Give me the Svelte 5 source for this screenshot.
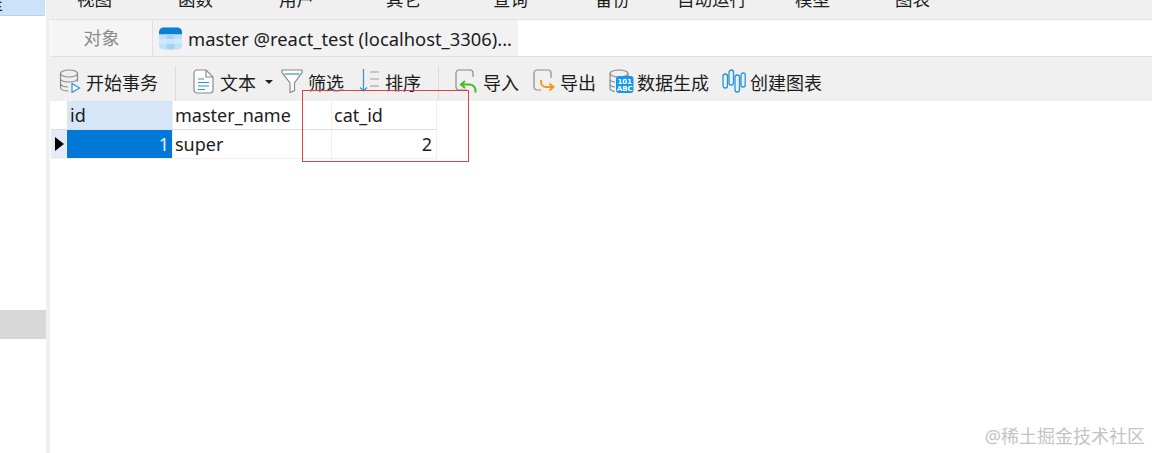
<script>
  const menus = ['视图', '函数', '用户', '其它', '查询', '备份', '自动运行', '模型', '图表'];
</script>

<div class="app">
  <aside class="side">
    <div class="side-top"><span>库</span></div>
    <div class="side-active"></div>
  </aside>
  <div class="gap"></div>

  <main class="main">
    <nav class="menu">
      {#each menus as m}
        <span>{m}</span>
      {/each}
    </nav>

    <div class="tabs">
      <div class="tab-obj">对象</div>
      <div class="tab-cur">
        <svg class="tab-icon" width="25" height="25" viewBox="0 0 26 25">
          <rect x="1" y="1" width="24" height="23" rx="5" fill="#bfe0fb" />
          <path d="M1 8V6a5 5 0 0 1 5-5h14a5 5 0 0 1 5 5v2z" fill="#0a7fd6" />
          <rect x="9" y="8" width="8" height="16" fill="#a6d2f7" />
          <rect x="1" y="13" width="24" height="5" fill="#d8edfd" opacity=".7" />
        </svg>
        <span>master @react_test (localhost_3306)...</span>
      </div>
      <div class="tab-rest"></div>
    </div>

    <div class="toolbar">
      <div class="tool t-begin">
        <svg width="22" height="24" viewBox="0 0 22 24" fill="none" stroke="#8a8a8a" stroke-width="1.2">
          <ellipse cx="10" cy="4.5" rx="8.5" ry="3.5" />
          <path d="M1.500 4.500v14c0 2 3.500 3.500 8 3.500M18.500 4.500v8M1.500 9.500c0 2 3.500 3.500 8.500 3.500s8.500-1.500 8.500-3.500M1.500 14.500c0 2 3.500 3.500 7.500 3.500" />
          <path d="M13 14.500l7.500 4.500-7.500 4.500z" stroke="#2a93de" fill="#fff" />
        </svg>
        <span>开始事务</span>
      </div>
      <i class="sep s1"></i>
      <div class="tool t-text">
        <svg width="21" height="25" viewBox="0 0 21 25" fill="none">
          <path d="M4 1h9l7 7v13a3 3 0 0 1-3 3H4a3 3 0 0 1-3-3V4a3 3 0 0 1 3-3z" stroke="#8a8a8a" stroke-width="1.200" fill="#fff" />
          <path d="M13 1v7h7" stroke="#8a8a8a" stroke-width="1.200" />
          <path d="M5 10h6M5 13.500h11M5 17h11M5 20.500h7" stroke="#2a93de" stroke-width="1.200" />
        </svg>
        <span>文本</span>
        <svg class="caret" width="8" height="4" viewBox="0 0 8 4"><path d="M0 0h8L4 4z" fill="#222" /></svg>
      </div>
      <div class="tool t-filter">
        <svg width="22" height="24" viewBox="0 0 22 24" fill="none" stroke="#8a8a8a" stroke-width="1.200">
          <path d="M1 1h20v2.500L13.500 14v7.500L9 23.500V14L1 3.500z" fill="#fff" />
          <path d="M3.500 5h15" stroke="#2a93de" />
        </svg>
        <span>筛选</span>
      </div>
      <div class="tool t-sort">
        <svg width="21" height="24" viewBox="0 0 21 24" fill="none" stroke-width="1.200">
          <path d="M4.500 0v22M1 18.500l3.500 3.500 3.500-3.500" stroke="#2a93de" />
          <path d="M11 3h9M11 10h9M11 17h9" stroke="#9a9a9a" />
        </svg>
        <span>排序</span>
      </div>
      <i class="sep s2"></i>
      <div class="tool t-import">
        <svg width="23" height="24" viewBox="0 0 23 24" fill="none">
          <path d="M12 21H4a3 3 0 0 1-3-3V4a3 3 0 0 1 3-3h11a3 3 0 0 1 3 3v4" stroke="#8a8a8a" stroke-width="1.200" />
          <path d="M10 12l-4 3.500 4 3.500M6 15.500h8.500a6 6 0 0 1 6 6v2" stroke="#4fb81e" stroke-width="2" />
        </svg>
        <span>导入</span>
      </div>
      <div class="tool t-export">
        <svg width="23" height="24" viewBox="0 0 23 24" fill="none">
          <path d="M9 21H5a3 3 0 0 1-3-3V4a3 3 0 0 1 3-3h11a3 3 0 0 1 3 3v5" stroke="#8a8a8a" stroke-width="1.200" />
          <path d="M9 11v2a5 5 0 0 0 5 5h7M17.500 14.500l4 3.500-4 3.500" stroke="#f39a1d" stroke-width="2" />
        </svg>
        <span>导出</span>
      </div>
      <div class="tool t-gen">
        <svg width="25" height="24" viewBox="0 0 25 24" fill="none">
          <ellipse cx="10" cy="4.500" rx="9" ry="3.500" stroke="#8a8a8a" stroke-width="1.200" />
          <path d="M1 4.500v15c0 1.500 2 2.500 5 3M19 4.500v3M1 10c0 1.500 2 3 5 3M1 15c0 1.500 2 3 5 3" stroke="#8a8a8a" stroke-width="1.200" />
          <rect x="7" y="7" width="17.500" height="17" rx="3" fill="#1596f0" />
          <text x="15.700" y="14.500" class="gen-text">101</text>
          <text x="15.700" y="22" class="gen-text">ABC</text>
        </svg>
        <span>数据生成</span>
      </div>
      <div class="tool t-chart">
        <svg width="24" height="24" viewBox="0 0 24 24" fill="none" stroke="#2a93de" stroke-width="1.300">
          <rect x="1" y="5" width="4.500" height="14" rx="2.250" />
          <rect x="7" y="1" width="4.500" height="15" rx="2.250" />
          <rect x="13" y="6" width="4.500" height="17" rx="2.250" />
          <rect x="19" y="4" width="4.200" height="14" rx="2.100" />
        </svg>
        <span>创建图表</span>
      </div>
    </div>

    <div class="grid">
      <div class="cell gutter head"></div>
      <div class="cell head col-id">id</div>
      <div class="cell head col-name">master_name</div>
      <div class="cell head col-cat">cat_id</div>

      <div class="cell gutter cur"><i class="arrow"></i></div>
      <div class="cell sel col-id">1</div>
      <div class="cell col-name">super</div>
      <div class="cell num col-cat">2</div>
    </div>

    <div class="redbox"></div>
  </main>

  <div class="mark">@稀土掘金技术社区</div>
</div>

<style>
  :global(body) {
    background: #fff;
  }

  .app {
    display: flex;
    width: 1152px;
    height: 453px;
    position: relative;
    overflow: hidden;
    font-family: "Noto Sans", "Noto Sans CJK SC", sans-serif;
    color: #1c1c1c;
  }

  /* left tree */
  .side {
    width: 46px;
    flex: none;
    background: #fff;
  }
  .side-top {
    height: 15px;
    background: #cce3f7;
    overflow: hidden;
    font-size: 18px;
    line-height: 0;
    border-bottom: 1px solid #b5d3ee;
    margin-right: 1px;
  }
  .side-top span {
    margin-left: -15px;
    display: inline-block;
    line-height: 10px;
  }
  .side-active {
    margin-top: 294px;
    height: 29px;
    background: #d8d8d8;
  }
  .gap {
    width: 4px;
    flex: none;
    background: #f0f0f0;
  }

  .main {
    flex: 1;
    position: relative;
    min-width: 0;
  }

  .menu {
    height: 19px;
    background: #f0f0f0;
    border-bottom: 1px solid #e2e2e2;
    overflow: hidden;
    display: grid;
    grid-template-columns: 101px 101px 107px 107px 102px 82px 118px 100px auto;
    padding-left: 27px;
    font-size: 17.5px;
    line-height: 10px;
  }
  .menu span {
    white-space: nowrap;
    margin-top: -6px;
  }

  .tabs {
    height: 36px;
    display: flex;
    border-bottom: 1px solid #e0e0e0;
    font-size: 18px;
  }
  .tab-obj {
    width: 102px;
    margin-left: 1px;
    background: #f5f5f5;
    border-right: 1px solid #dfdfdf;
    color: #8c8c8c;
    text-align: center;
    line-height: 36px;
    box-sizing: border-box;
  }
  .tab-cur {
    width: 365px;
    background: #f2f2f2;
    display: flex;
    align-items: center;
    gap: 5px;
    padding-left: 5px;
    box-sizing: border-box;
    font-size: 18.35px;
    white-space: nowrap;
  }
  .tab-rest {
    flex: 1;
    background: #fff;
  }

  .toolbar {
    height: 44px;
    box-sizing: border-box;
    padding-top: 4px;
    background: #f0f0f0;
    display: flex;
    align-items: center;
    font-size: 18px;
  }
  .tool {
    display: flex;
    align-items: center;
    white-space: nowrap;
  }
  .tool span {
    margin-top: 1px;
  }
  .t-begin { margin-left: 9px; gap: 5px; }
  .s1 { margin-left: 17px; }
  .t-text { margin-left: 17px; gap: 6px; }
  .t-text .caret { margin-left: 3px; margin-top: 2px; }
  .t-filter { margin-left: 8px; gap: 5px; }
  .t-sort { margin-left: 15px; gap: 5px; }
  .s2 { margin-left: 17px; }
  .t-import { margin-left: 16px; gap: 5px; }
  .t-export { margin-left: 13px; gap: 5px; }
  .t-gen { margin-left: 13px; gap: 3px; }
  .t-chart { margin-left: 13px; gap: 4px; }

  .sep {
    width: 1px;
    height: 35px;
    align-self: flex-end;
    background: #dddddd;
  }
  .gen-text {
    font-family: "DejaVu Sans", sans-serif;
    font-size: 7px;
    font-weight: 700;
    fill: #fff;
    text-anchor: middle;
  }

  .grid {
    display: grid;
    grid-template-columns: 16px 106px 159px 105px;
    grid-template-rows: 29px 29px;
    margin-left: 1px;
    width: max-content;
    font-size: 18px;
    line-height: 28px;
  }
  .cell {
    border-right: 1px solid #efefef;
    border-bottom: 1px solid #efefef;
    padding: 0 3px;
    box-sizing: border-box;
    min-width: 0;
  }
  .col-name,
  .col-cat {
    padding-left: 2px;
  }
  .head {
    border-bottom: 1px solid #dedede;
  }
  .head.col-id {
    background: #d6e6f6;
  }
  .gutter {
    padding: 0;
  }
  .gutter.head {
    border-right: 0;
  }
  .gutter.cur {
    background: #e3ecf5;
    display: flex;
    align-items: center;
    padding-left: 4px;
  }
  .arrow {
    border-left: 9px solid #000;
    border-top: 7px solid transparent;
    border-bottom: 7px solid transparent;
  }
  .sel {
    background: #0078d7;
    color: #e6f2fc;
    text-align: right;
  }
  .num {
    text-align: right;
    padding-right: 4px;
  }

  /* annotation drawn over the screenshot */
  .redbox {
    position: absolute;
    left: 252px;
    top: 90px;
    border: 1px solid #d9414b;
    box-sizing: border-box;
    width: 167px;
    height: 72px;
  }

  .mark {
    position: absolute;
    right: 7px;
    bottom: 5px;
    font-size: 18px;
    color: #c4c4c4;
    white-space: nowrap;
  }
</style>
